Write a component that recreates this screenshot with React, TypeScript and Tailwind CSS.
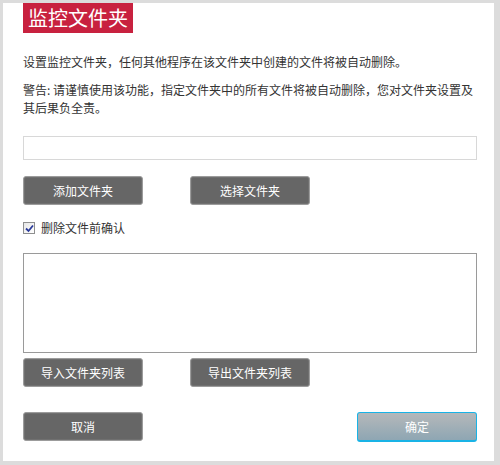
const font = { fontFamily: '"Microsoft YaHei", "Noto Sans CJK SC", "Noto Sans", sans-serif' };

function GrayButton({ label }: { label: string }) {
  return (
    <button
      type="button"
      className="h-[29px] w-[120px] rounded-[3px] border border-[#9c9c9c] bg-[#666666] text-[12px] text-white shadow-[inset_0_0_0_1px_#707070]"
    >
      {label}
    </button>
  );
}

export default function App() {
  return (
    <div
      className="h-[465px] w-[500px] bg-[#dcdcdc] pl-[3px] pt-[3px] pr-[6px] pb-[4px]"
      style={font}
    >
      <div className="flex h-[458px] w-[491px] flex-col bg-white pl-[20px] pr-[17px] text-[12px] text-[#333]">
        <div className="flex h-[30px] w-[110px] items-center justify-center bg-[#c8213f] text-[20px] leading-none text-white">
          监控文件夹
        </div>

        <p className="mt-[20px] leading-[18px]">
          设置监控文件夹，任何其他程序在该文件夹中创建的文件将被自动删除。
        </p>
        <p className="mt-[10px] leading-[18px]">
          警告: 请谨慎使用该功能，指定文件夹中的所有文件将被自动删除，您对文件夹设置及其后果负全责。
        </p>

        <input
          type="text"
          className="mt-[19px] h-[24px] w-full border border-[#d8d8d8] outline-none"
        />

        <div className="mt-[16px] flex gap-[47px]">
          <GrayButton label="添加文件夹" />
          <GrayButton label="选择文件夹" />
        </div>

        <label className="mt-[17px] flex items-center gap-[6px] leading-[12px]">
          <span className="flex h-[12px] w-[12px] items-center justify-center border border-[#8e8f8f] bg-gradient-to-br from-[#e6e6e6] to-white">
            <svg width="9" height="9" viewBox="0 0 9 9">
              <path d="M1 4.5 L3.5 7 L8 1.5" fill="none" stroke="#2a3a9a" strokeWidth="1.8" />
            </svg>
          </span>
          删除文件前确认
        </label>

        <textarea className="mt-[19px] h-[100px] w-full resize-none border border-[#9a9a9a] outline-none" />

        <div className="mt-[5px] flex gap-[47px]">
          <GrayButton label="导入文件夹列表" />
          <GrayButton label="导出文件夹列表" />
        </div>

        <div className="mt-[25px] flex justify-between">
          <GrayButton label="取消" />
          <button
            type="button"
            className="h-[30px] w-[120px] rounded-[3px] border border-b-2 border-[#19b3e6] bg-gradient-to-b from-[#b5b8ba] to-[#8ea6b3] text-[12px] text-white"
          >
            确定
          </button>
        </div>
      </div>
    </div>
  );
}
